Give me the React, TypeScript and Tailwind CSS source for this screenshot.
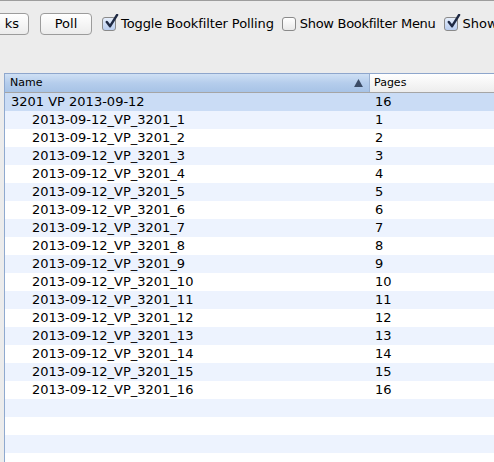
import React from "react";

const font = { fontFamily: '"DejaVu Sans", "Liberation Sans", sans-serif' };

const children = Array.from({ length: 16 }, (_, i) => ({
  name: `2013-09-12_VP_3201_${i + 1}`,
  pages: String(i + 1),
}));

function Check({ checked }: { checked: boolean }) {
  return (
    <span
      className={`relative shrink-0 inline-block w-[14px] h-[14px] rounded-[3px] border border-[#8a8a8a] ${
        checked ? "bg-gradient-to-b from-[#e6eefb] to-[#b9cdef]" : "bg-gradient-to-b from-[#ffffff] to-[#e9e9e9]"
      }`}
    >
      {checked && (
        <svg viewBox="0 0 16 16" className="absolute left-[1px] -top-[4px] w-[15px] h-[15px]">
          <path d="M3 8.5 L6.5 13 L14 1" fill="none" stroke="#1f2a44" strokeWidth="2.6" strokeLinecap="round" strokeLinejoin="round" />
        </svg>
      )}
    </span>
  );
}

function Button({ label, className }: { label: string; className: string }) {
  return (
    <div
      className={`shrink-0 h-[22px] rounded-[4px] border border-[#9c9c9c] bg-gradient-to-b from-[#ffffff] to-[#ececec] flex items-center justify-center text-[13px] text-black ${className}`}
    >
      {label}
    </div>
  );
}

export default function App() {
  return (
    <div className="w-[494px] h-[462px] overflow-hidden bg-[#ececec] text-black" style={font}>
      <div className="h-[1px] bg-[#9d9d9d]" />
      {/* toolbar */}
      <div className="h-[72px] flex items-start pt-[12px] whitespace-nowrap text-[13px]">
        <Button label="ks" className="w-[41px] -ml-[12px] justify-end pr-[9px]" />
        <Button label="Poll" className="w-[52px] ml-[11px]" />
        <label className="shrink-0 flex items-center ml-[10px] h-[22px]">
          <Check checked />
          <span className="ml-[5px] tracking-[-0.1px]">Toggle Bookfilter Polling</span>
        </label>
        <label className="shrink-0 flex items-center ml-[8px] h-[22px]">
          <Check checked={false} />
          <span className="ml-[4px] tracking-[-0.3px]">Show Bookfilter Menu</span>
        </label>
        <label className="shrink-0 flex items-center ml-[9px] h-[22px]">
          <Check checked />
          <span className="ml-[4px]">Show</span>
        </label>
      </div>
      {/* table */}
      <div className="ml-[4px] border-l border-[#8fa9cf] bg-white h-[389px]">
        <div className="flex h-[20px] border-t border-[#8ea6cc] border-b border-b-[#a5a5a5] text-[11px]">
          <div className="w-[365px] flex items-center justify-between pl-[5px] pr-[6px] bg-gradient-to-b from-[#cfe0f4] via-[#b5cdec] to-[#a7c3e6] border-r border-[#9ab1d1]">
            <span>Name</span>
            <svg viewBox="0 0 10 9" className="w-[9px] h-[8px]">
              <path d="M5 0 L10 9 L0 9 Z" fill="#3c4c66" />
            </svg>
          </div>
          <div className="flex-1 flex items-center pl-[4px] bg-gradient-to-b from-[#ffffff] to-[#ededed]">
            Pages
          </div>
        </div>
        <div className="text-[13px]">
          <div className="flex h-[18px] items-center bg-[#cadcf5]">
            <div className="w-[365px] pl-[6px]">3201 VP 2013-09-12</div>
            <div className="pl-[5px]">16</div>
          </div>
          {children.map((c, i) => (
            <div
              key={c.name}
              className={`flex h-[18px] items-center ${i % 2 === 0 ? "bg-[#edf3fe]" : "bg-white"}`}
            >
              <div className="w-[365px] pl-[27px]">{c.name}</div>
              <div className="pl-[5px]">{c.pages}</div>
            </div>
          ))}
          <div className="h-[18px] bg-[#edf3fe]" />
          <div className="h-[18px] bg-white" />
          <div className="h-[18px] bg-[#edf3fe]" />
          <div className="h-[18px] bg-white" />
        </div>
      </div>
    </div>
  );
}
